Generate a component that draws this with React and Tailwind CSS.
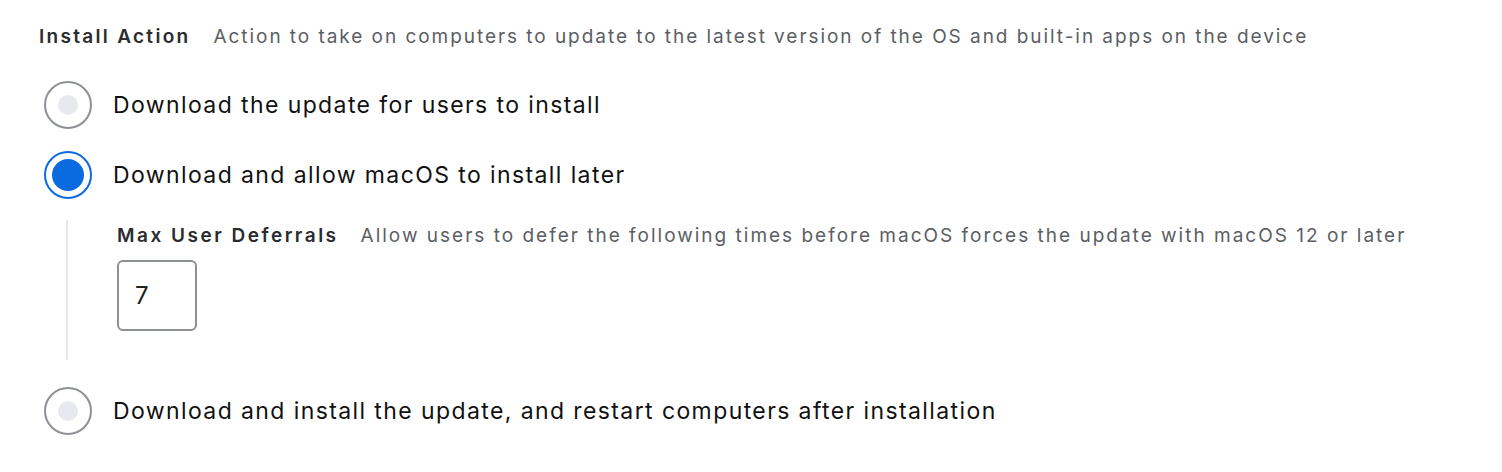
import React, { useState } from "react";

const options = [
  { id: "user", label: "Download the update for users to install" },
  { id: "later", label: "Download and allow macOS to install later" },
  { id: "restart", label: "Download and install the update, and restart computers after installation" },
];

function Radio({ checked }) {
  return checked ? (
    <span className="flex h-[48px] w-[48px] shrink-0 items-center justify-center rounded-full border-2 border-[#0a6be0] bg-white">
      <span className="h-[32px] w-[32px] rounded-full bg-[#0a6be0]" />
    </span>
  ) : (
    <span className="flex h-[48px] w-[48px] shrink-0 items-center justify-center rounded-full border-2 border-[#8d9096] bg-white">
      <span className="h-[20px] w-[20px] rounded-full bg-[#e8e9ee]" />
    </span>
  );
}

export default function App() {
  const [selected, setSelected] = useState("later");
  const [deferrals, setDeferrals] = useState("7");

  return (
    <div className="h-[472px] w-[1502px] bg-white font-['Inter',sans-serif]">
      <div className="flex items-baseline gap-[23px] pl-[39px] pt-[25px] leading-[24px] whitespace-nowrap">
        <span className="text-[19px] font-semibold tracking-[2.3px] text-[#2a2c30]">Install Action</span>
        <span className="text-[19px] tracking-[1.95px] text-[#5b5e64]">
          Action to take on computers to update to the latest version of the OS and built-in apps on the device
        </span>
      </div>

      <div className="flex flex-col pl-[44px] pt-[21px]">
        {options.map((o) => (
          <div key={o.id}>
            <button
              onClick={() => setSelected(o.id)}
              className="flex h-[70px] items-center gap-[21px] text-left whitespace-nowrap"
            >
              <Radio checked={selected === o.id} />
              <span className="text-[23px] tracking-[1.4px] text-[#111]">{o.label}</span>
            </button>
            {o.id === "later" && selected === "later" && (
              <div className="ml-[22px] mb-[16px] mt-[10px] flex flex-col border-l-2 border-[#e6e8ec] pb-[29px] pl-[49px] pt-[4px]">
                <div className="flex items-baseline gap-[22px] leading-[24px] whitespace-nowrap">
                  <span className="text-[19px] font-semibold tracking-[2.5px] text-[#2a2c30]">Max User Deferrals</span>
                  <span className="text-[19px] tracking-[2px] text-[#5b5e64]">
                    Allow users to defer the following times before macOS forces the update with macOS 12 or later
                  </span>
                </div>
                <input
                  value={deferrals}
                  onChange={(e) => setDeferrals(e.target.value)}
                  className="mt-[12px] h-[71px] w-[80px] rounded-[6px] border-2 border-[#8d9096] px-[16px] text-[24px] text-[#222] outline-none"
                />
              </div>
            )}
          </div>
        ))}
      </div>
    </div>
  );
}
